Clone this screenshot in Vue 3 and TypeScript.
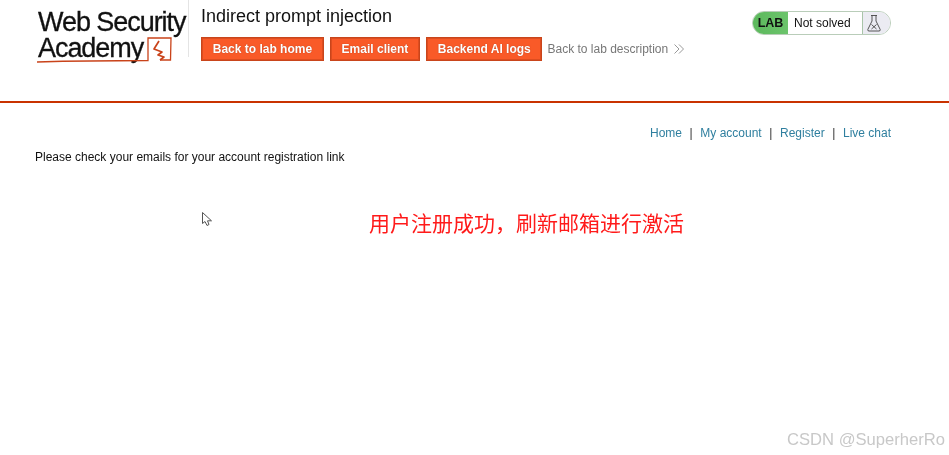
<template>
  <div class="page">
    <header class="lab-header">
      <div class="logo">
        <div class="logo-text">
          <span>Web Security</span>
          <span>Academy</span>
        </div>
        <svg class="logo-mark" width="151" height="64" viewBox="0 0 151 64" fill="none">
          <path d="M0 62 Q50 60.5 111 60.5 V38 H134 L133.5 60 H123" stroke="#c9431a" stroke-width="1.3" />
          <path d="M122 41 L117 49 L125 52 L121 55 L127 57 L123 60" stroke="#c9431a" stroke-width="1.7" stroke-linejoin="round" />
        </svg>
      </div>
      <div class="title-block">
        <h2>Indirect prompt injection</h2>
        <div class="actions">
          <a v-for="link in labLinks" :key="link" class="btn">{{ link }}</a>
          <a class="back-link">
            Back to lab description
            <svg width="10" height="10" viewBox="0 0 10 10" fill="none" stroke="#999" stroke-width="1">
              <path d="M0.5 0.5 L5 5 L0.5 9.5 M5 0.5 L9.5 5 L5 9.5" />
            </svg>
          </a>
        </div>
      </div>
      <div class="status">
        <span class="status-lab">LAB</span>
        <span class="status-text">Not solved</span>
        <span class="status-icon">
          <svg width="14" height="17" viewBox="0 0 14 17" fill="none" stroke="#444" stroke-width="0.9">
            <path d="M4 0.5 H10 M5 0.5 V6 L0.8 14.5 Q0.5 16 2 16 H12 Q13.5 16 13.2 14.5 L9 6 V0.5" />
            <path d="M4.5 9.5 L9.5 14 M9.5 9.5 L4.5 14" />
          </svg>
        </span>
      </div>
    </header>

    <main class="content">
      <nav class="top-links">
        <template v-for="(item, i) in navItems" :key="item">
          <span v-if="i > 0" class="sep">|</span>
          <a>{{ item }}</a>
        </template>
      </nav>
      <p class="message">Please check your emails for your account registration link</p>
    </main>

    <svg class="cursor" width="11" height="15" viewBox="0 0 11 15" fill="#fff" stroke="#555" stroke-width="1">
      <path d="M0.5 0.5 V11.5 L3 9.5 L5 13.5 L7 12.5 L5.5 8.8 H9.5 Z" />
    </svg>
    <div class="note">用户注册成功，刷新邮箱进行激活</div>
    <div class="watermark">CSDN @SuperherRo</div>
  </div>
</template>

<script setup lang="ts">
const labLinks: string[] = ["Back to lab home", "Email client", "Backend AI logs"];
const navItems: string[] = ["Home", "My account", "Register", "Live chat"];
</script>

<style scoped>
.page {
  position: relative;
  width: 949px;
  height: 455px;
  overflow: hidden;
  background: #fff;
  font-family: "Liberation Sans", Arial, sans-serif;
  color: #000;
  will-change: transform;
}
.lab-header {
  display: flex;
  height: 101px;
  padding-left: 37px;
  padding-right: 58px;
  border-bottom: 2px solid #c93200;
}
.logo {
  position: relative;
  width: 151px;
  height: 64px;
  flex: none;
}
.logo-text {
  display: flex;
  flex-direction: column;
  padding-top: 9px;
  padding-left: 1px;
  font-size: 27px;
  line-height: 26px;
  letter-spacing: -1.05px;
  white-space: nowrap;
  color: #111;
  -webkit-text-stroke: 0.3px #111;
}
.logo-mark {
  position: absolute;
  left: 0;
  top: 0;
}
.title-block {
  height: 57px;
  padding-left: 12px;
  border-left: 1px solid #e4e4e4;
  flex: 1;
}
h2 {
  margin: 5px 0 0;
  font-size: 18px;
  line-height: 22px;
  font-weight: 400;
  color: #111;
}
.actions {
  display: flex;
  align-items: center;
  gap: 6px;
  margin-top: 10px;
}
.btn {
  box-sizing: border-box;
  height: 24px;
  padding: 0 10.75px;
  line-height: 22px;
  font-size: 12px;
  font-weight: 700;
  color: #fff;
  background: #f95a28;
  border: 1px solid #c9451b;
  box-shadow: inset 0 0 0 1px #dd4d20;
  text-shadow: 0 0 1px rgba(80, 20, 0, 0.5);
  white-space: nowrap;
}
.back-link {
  display: flex;
  align-items: center;
  gap: 6px;
  margin-left: -1px;
  font-size: 12px;
  color: #777;
  white-space: nowrap;
}
.status {
  display: flex;
  align-items: stretch;
  flex: none;
  width: 139px;
  height: 24px;
  margin-top: 11px;
  box-sizing: border-box;
  border: 1px solid #b9cdb9;
  border-radius: 12px;
  overflow: hidden;
  font-size: 12px;
}
.status-lab {
  width: 35px;
  background: linear-gradient(90deg, #5cb85c, #6cc46c);
  color: #111;
  font-weight: 700;
  line-height: 22px;
  text-align: center;
  font-size: 12.5px;
}
.status-text {
  width: 75px;
  line-height: 22px;
  padding-left: 6px;
  box-sizing: border-box;
  color: #111;
  background: #fff;
  border-right: 1px solid #a9c4a9;
}
.status-icon {
  flex: 1;
  display: flex;
  align-items: center;
  justify-content: center;
  background: #ebebf2;
  padding-right: 5px;
}
.content {
  padding: 22px 58px 0 35px;
}
.top-links {
  display: flex;
  justify-content: flex-end;
  gap: 7.6px;
  font-size: 12px;
  line-height: 16px;
}
.top-links a {
  color: #2f7f9f;
}
.top-links .sep {
  color: #333;
}
.message {
  margin: 8px 0 0;
  font-size: 12px;
  line-height: 16px;
  color: #111;
}
.cursor {
  position: absolute;
  left: 202px;
  top: 212px;
}
.note {
  position: absolute;
  left: 369px;
  top: 208px;
  font-family: "Noto Sans CJK SC", sans-serif;
  font-size: 21px;
  line-height: 28px;
  color: #ff1a1a;
  white-space: nowrap;
}
.watermark {
  position: absolute;
  right: 4px;
  top: 430px;
  font-size: 16.6px;
  line-height: 20px;
  color: #c8c8c8;
  white-space: nowrap;
}
</style>
